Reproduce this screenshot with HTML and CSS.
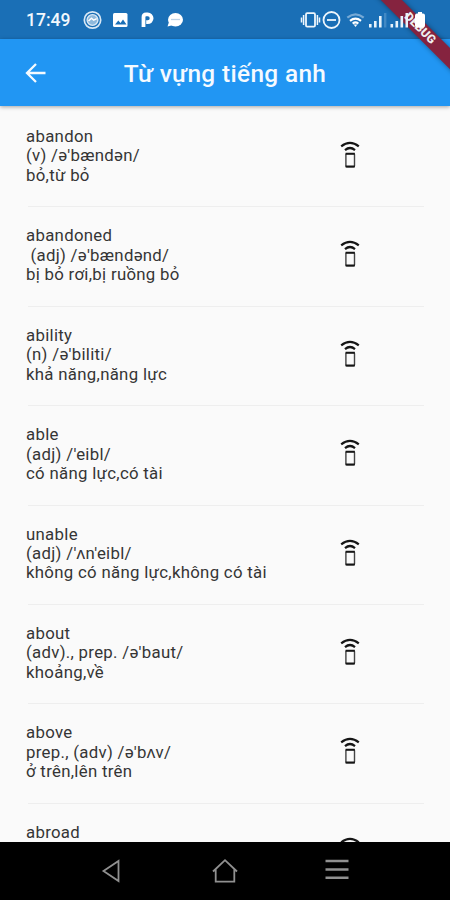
FILE: index.html
```html
<!DOCTYPE html>
<html lang="vi">
<head>
<meta charset="utf-8">
<title>Từ vựng tiếng anh</title>
<link rel="stylesheet" href="styles.css">
</head>
<body>
<svg class="defs" width="0" height="0"><defs>
<symbol id="remote" viewBox="0 0 20 28">
<path d="M1.2 5.400Q10-1.600 18.800 5.400" fill="none" stroke="#151515" stroke-width="2.200"/>
<path d="M5 9.100Q10 4.900 15 9.100" fill="none" stroke="#151515" stroke-width="2.200"/>
<rect x="5.900" y="12.600" width="8.600" height="13.200" rx="1" fill="none" stroke="#444" stroke-width="1.400"/>
<path d="M5.600 12.700h9.200M5.600 25.600h9.200" stroke="#151515" stroke-width="2"/>
</symbol>
</defs></svg>
<div class="phone">
<header class="status">
<span class="time">17:49</span>
<svg class="notices" width="106" height="24" viewBox="0 0 106 24">
<circle cx="11.5" cy="12" r="8.2" fill="none" stroke="#d9e8f5" stroke-width="1.7"/>
<circle cx="11.5" cy="12" r="5.4" fill="#8fb9dc" stroke="#d9e8f5" stroke-width="1.4"/>
<path d="M7.5 13l3-2.800 2.200 2 3-1.500" fill="none" stroke="#fff" stroke-width="1.500"/>
<rect x="32" y="5" width="14.500" height="14" rx="1.500" fill="#fff"/>
<path d="M34 16.500l3.300-4 2.200 2.500 2.500-3.500 3.500 5z" fill="#1a6fb6"/>
<path d="M62.500 19V9q0-2.600 2.600-2.600h1.600a3.900 3.900 0 0 1 0 7.800h-1.500" fill="none" stroke="#fff" stroke-width="3.800"/>
<ellipse cx="94.500" cy="11.700" rx="7.500" ry="6.700" fill="#fff"/>
<path d="M88 14l-1.500 4.500 6-1.500z" fill="#fff"/>
<path d="M90 11.500h9" stroke="#bdd3e8" stroke-width="1.300"/>
</svg>
<svg class="system" width="132" height="24" viewBox="0 0 132 24">
<g fill="none" stroke="#eef6fc" stroke-width="1.800">
<rect x="6" y="5.200" width="9" height="13.500" rx="1.200"/>
<path d="M3.600 7v10M17.400 7v10M1.500 9.500v5M19.500 9.500v5" stroke-width="1.500"/>
<circle cx="31.500" cy="12" r="8"/><path d="M27 12h9"/>
</g>
<g fill="none" stroke-width="2.200">
<path d="M47.300 9.700q8.200-6.700 16.400 0" stroke="#76a9d5"/>
<path d="M50 12.800q5.500-4.400 11 0" stroke="#fff"/><path d="M52.700 15.600q2.800-2.300 5.600 0" stroke="#fff"/>
</g><path d="M53.700 16.500h3.600l-1.800 2.400z" fill="#fff"/>
<g fill="#e8f3fb"><path d="M69 16h2.600v3.500H69zM74 13h2.600v6.500H74zM79 8h2.600v11.500H79zM90.500 16h2.600v3.500h-2.600zM95.500 13h2.600v6.500h-2.600zM100.500 8h2.600v11.500h-2.600z"/><path d="M84 5h2.400v14.500H84z" fill="#4289c4"/><path d="M105.500 5h2.500v14.500h-2.500z"/></g>
<path d="M117 5.500h1V4h4v1.500h1q2 0 2 2v10q0 2-2 2h-6q-2 0-2-2v-10q0-2 2-2z" fill="#fff"/>
</svg>
</header>
<div class="appbar">
<svg class="back" width="24" height="24" viewBox="0 0 24 24"><path d="M21.500 12H3M12 3l-9 9 9 9" fill="none" stroke="#f4faff" stroke-width="2.300"/></svg>
<h1>Từ vựng tiếng anh</h1>
</div>
<main class="list">
<article class="row"><p>abandon
(v) /ə'bændən/
bỏ,từ bỏ</p><svg><use href="#remote"/></svg></article>
<article class="row"><p>abandoned
 (adj) /ə'bændənd/
bị bỏ rơi,bị ruồng bỏ</p><svg><use href="#remote"/></svg></article>
<article class="row"><p>ability
(n) /ə'biliti/
khả năng,năng lực</p><svg><use href="#remote"/></svg></article>
<article class="row"><p>able
(adj) /'eibl/
có năng lực,có tài</p><svg><use href="#remote"/></svg></article>
<article class="row"><p>unable
(adj) /'ʌn'eibl/
không có năng lực,không có tài</p><svg><use href="#remote"/></svg></article>
<article class="row"><p>about
(adv)., prep. /ə'baut/
khoảng,về</p><svg><use href="#remote"/></svg></article>
<article class="row"><p>above
prep., (adv) /ə'bʌv/
ở trên,lên trên</p><svg><use href="#remote"/></svg></article>
<article class="row"><p>abroad</p><svg><use href="#remote"/></svg></article>
</main>
<nav class="navbar">
<svg width="28" height="28" viewBox="0 0 28 28"><path d="M19.500 4v20L4.500 14z"/></svg>
<svg width="28" height="28" viewBox="0 0 28 28"><path d="M2 14.500L14 3.200l12 11.300M4.700 12.500v12.200h18.600V12.500"/></svg>
<svg width="28" height="28" viewBox="0 0 28 28"><path d="M2.500 4h23M2.500 12.500h23M2.500 20.700h23" stroke-width="2.400"/></svg>
</nav>
<div class="debug">DEBUG</div>
</div>
</body>
</html>
```
FILE: styles.css
```css
* { box-sizing: border-box; }
body { margin: 0; font-family: Roboto, "Noto Sans", sans-serif; }
.defs { position: absolute; }
.phone { position: relative; width: 450px; height: 900px; overflow: hidden; display: flex; flex-direction: column; background: #fafafa; }
.status { height: 39px; flex: none; display: flex; align-items: center; padding-left: 26px; background: #1a6fb6; color: #f2f8fd; }
.time { width: 55px; font-size: 17.5px; font-weight: 500; letter-spacing: 0; padding-top: 1px; }
.notices { flex: none; }
.system { flex: none; margin-left: 113px; position: relative; z-index: 3; }
.appbar { height: 67px; flex: none; display: flex; align-items: center; padding-left: 24px; background: #2196f3; box-shadow: 0 1px 4px rgba(0, 0, 0, .35); z-index: 1; }
.back { flex: none; }
h1 { flex: none; width: 354px; margin: 2px 0 0; text-align: center; color: #f5faff; font-size: 24.4px; font-weight: 500; letter-spacing: .35px; }
.list { flex: 1; min-height: 0; overflow: hidden; padding-top: 2px; }
.row { height: 99.4px; display: flex; justify-content: space-between; margin: 0 26px 0 28px; padding-top: 19px; border-bottom: 1px solid #eee; }
.row p { margin: 0 0 0 -2px; white-space: pre; color: #353535; font-size: 16.8px; line-height: 19.4px; letter-spacing: .3px; }
.row svg { width: 20px; height: 28px; margin: 14px 64px 0 0; flex: none; }
.navbar { height: 58px; flex: none; display: flex; justify-content: center; gap: 84px; padding-top: 15px; background: #000; }
.navbar svg { fill: none; stroke: #909090; stroke-width: 1.8; }
.debug { position: absolute; left: 360px; top: 21px; width: 120px; height: 14.6px; transform: rotate(45deg); background: #85233f; color: #eee; font-size: 12px; font-weight: 900; line-height: 15px; text-align: center; box-shadow: 0 0 5px rgba(0, 0, 0, .4); z-index: 2; }
```
